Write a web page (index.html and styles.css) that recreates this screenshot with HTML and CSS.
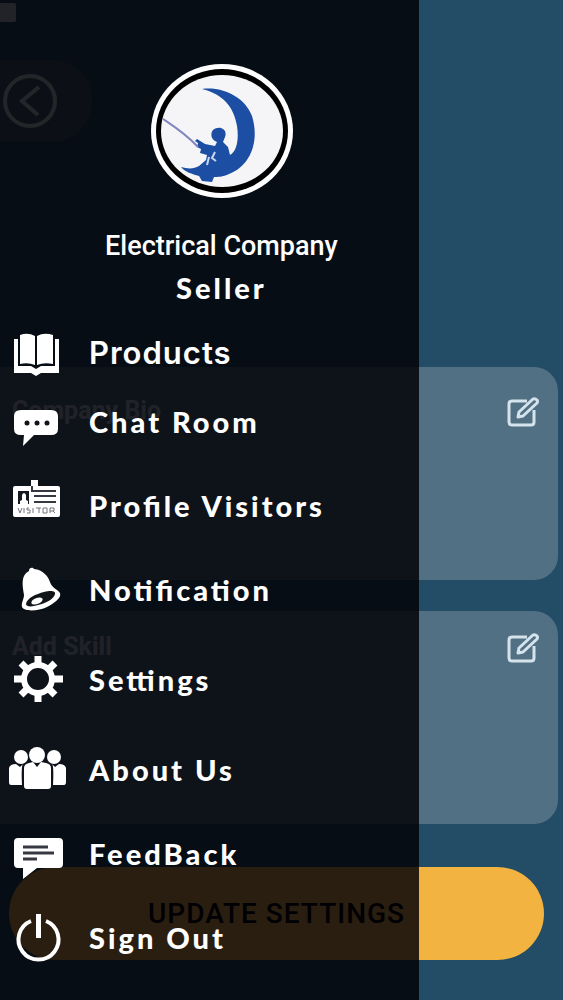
FILE: index.html
```html
<!DOCTYPE html>
<html lang="en">
<head>
    <meta charset="UTF-8">
    <meta name="viewport" content="width=device-width, initial-scale=1.0">
    <title>Seller Menu</title>
    <link rel="stylesheet" href="styles.css">
</head>
<body>
    <main class="page">
        <div class="status"><span class="status-icon"></span></div>
        <button class="back" type="button" aria-label="Back">
            <svg width="56" height="56" viewBox="0 0 56 56">
                <circle cx="28" cy="28" r="25"/>
                <path d="M37 14L20 28L36 42"/>
            </svg>
        </button>
        <section class="card">
            <h2>Company Bio</h2>
            <button class="edit" type="button" aria-label="Edit company bio">
                <svg width="34" height="34" viewBox="0 0 34 34">
                    <path d="M21 6H6Q3 6 3 9V27Q3 30 6 30H25Q28 30 28 27V15"/>
                    <path d="M12 22L13 17L27 4Q29 3 31 5Q32 6 31 8L17 21Z"/>
                </svg>
            </button>
        </section>
        <section class="card skill">
            <h2>Add Skill</h2>
            <button class="edit" type="button" aria-label="Edit skills">
                <svg width="34" height="34" viewBox="0 0 34 34">
                    <path d="M21 6H6Q3 6 3 9V27Q3 30 6 30H25Q28 30 28 27V15"/>
                    <path d="M12 22L13 17L27 4Q29 3 31 5Q32 6 31 8L17 21Z"/>
                </svg>
            </button>
        </section>
        <button class="update" type="button">UPDATE SETTINGS</button>
    </main>

    <aside class="drawer">
        <div class="profile">
            <!-- Company logo -->
            <svg class="logo" width="144" height="136" viewBox="0 0 144 136">
                <ellipse cx="73" cy="68" rx="71" ry="67" fill="#fff"/>
                <ellipse cx="73" cy="68" rx="66" ry="62" fill="#000"/>
                <ellipse cx="73" cy="68" rx="61" ry="56" fill="#f5f5f8"/>
                <path d="M53 26C73 23 96 34 103 53C111 79 101 103 80 111C74 114 68 114 65 114L63 119L53 118L50 113C43 111 36 109 32 104C39 106 45 106 50 103L57 97L58 92L51 90L52 86L48 84L49 80L46 78L48 76L56 81L66 83L68 79C62 77 61 71 64 67C70 62 79 66 76 74L74 79L79 84L81 92C88 88 90 76 88 63C85 44 74 31 53 26Z" fill="#1c4fa3"/>
                <path d="M14 56C26 64 37 71 49 84" fill="none" stroke="#8088bd" stroke-width="2"/>
                <path d="M60 94L58 102M66 89L63 95L67 98" fill="none" stroke="#c9d6ee" stroke-width="2"/>
            </svg>
            <h1>Electrical Company</h1>
            <p>Seller</p>
        </div>
        <nav>
            <ul class="menu">
                <li class="short">
                    <a href="#">
                        <svg viewBox="0 0 58 52">
                            <path d="M5 12H9V39H22L27 42L32 39H46V12H50V46H32L27 49L22 46H5Z"/>
                            <path d="M11 8Q19 5 26 9V38Q19 35 11 37Z"/>
                            <path d="M28 9Q35 5 44 8V37Q35 35 28 38Z"/>
                        </svg>
                        <span class="products">Products</span>
                    </a>
                </li>
                <li>
                    <a href="#">
                        <svg viewBox="0 0 58 52">
                            <path d="M12 14H42Q49 14 49 20V33Q49 39 42 39H25L14 50L15 39H12Q5 39 5 33V20Q5 14 12 14Z"/>
                            <g fill="#111318"><circle cx="18" cy="27" r="2.5"/><circle cx="28" cy="27" r="2.5"/><circle cx="38" cy="27" r="2.5"/></g>
                        </svg>
                        <span>Chat Room</span>
                    </a>
                </li>
                <li>
                    <a href="#">
                        <svg viewBox="0 0 58 52">
                            <path d="M6 6H22V0H29V6H49Q51 6 51 8V35Q51 37 49 37H6Q4 37 4 35V8Q4 6 6 6Z"/>
                            <path d="M9 11H20V24H9Z" fill="#15181e"/>
                            <path d="M11 24V21L13 20V15Q15 11 17 15V20L19 21V24Z"/>
                            <path d="M23 6V11H47M25 16H47M25 22H47" fill="none" stroke="#343840" stroke-width="2"/>
                            <path d="M9 28L11 33L13 28M15 28V33M20 28H18V30H21V33H18M24 28V33M27 28H32M30 28V33M34 28H38V33H34ZM41 33V28H45V31H41M44 31L46 33" fill="none" stroke="#70757b" stroke-width="1"/>
                        </svg>
                        <span>Profile Visitors</span>
                    </a>
                </li>
                <li class="tall">
                    <a href="#">
                        <svg viewBox="0 0 58 52">
                            <path d="M20 7C20 3 24 3 25 5C34 6 39 12 41 18C43 24 47 24 51 29C53 34 44 40 38 43C30 47 15 48 13 43C12 39 15 35 15 31C13 20 12 11 20 7Z"/>
                            <path d="M17 40C18 34 27 30 35 28C42 26 47 27 46 30C45 35 37 39 29 41C23 43 17 43 17 40Z" fill="#11151a"/>
                            <ellipse cx="28" cy="37" rx="6" ry="3" transform="rotate(-22 28 37)"/>
                        </svg>
                        <span>Notification</span>
                    </a>
                </li>
                <li class="tall">
                    <a href="#">
                        <svg viewBox="0 0 58 52">
                            <g fill="none" stroke="#fff">
                                <circle cx="29" cy="25" r="14" stroke-width="6"/>
                                <path d="M29 2V10M29 40V48M5 25H14M44 25H54M12 9L19 16M39 34L46 41M46 9L39 16M19 34L12 41" stroke-width="7"/>
                            </g>
                        </svg>
                        <span>Settings</span>
                    </a>
                </li>
                <li>
                    <a href="#">
                        <svg viewBox="0 0 58 52">
                            <circle cx="12" cy="13" r="7"/><circle cx="45" cy="13" r="7"/><circle cx="28" cy="11" r="8"/>
                            <path d="M0 24Q1 20 7 20L11 23L14 20Q12 22 13 41H2Q0 41 0 38Z"/>
                            <path d="M57 24Q56 20 50 20L46 23L43 20Q45 22 44 41H55Q57 41 57 38Z"/>
                            <path d="M15 24Q15 20 20 19L24 18L28 23L32 18L37 19Q42 20 42 24V42Q42 45 39 45H18Q15 45 15 42Z"/>
                        </svg>
                        <span>About Us</span>
                    </a>
                </li>
                <li>
                    <a href="#">
                        <svg viewBox="0 0 58 52">
                            <path d="M9 10H50Q54 10 54 14V36Q54 40 50 40H28L14 51V40H9Q5 40 5 36V14Q5 10 9 10Z"/>
                            <path d="M14 19H39M14 25H45M14 31H28" fill="none" stroke="#363a40" stroke-width="3"/>
                        </svg>
                        <span>FeedBack</span>
                    </a>
                </li>
                <li>
                    <a href="#">
                        <svg viewBox="0 0 58 52">
                            <path d="M22 9A20 20 0 1 0 37 9" fill="none" stroke="#fff" stroke-width="4"/>
                            <path d="M27 2H32V26H27Z"/>
                        </svg>
                        <span>Sign Out</span>
                    </a>
                </li>
            </ul>
        </nav>
    </aside>
</body>
</html>
```
FILE: styles.css
```css
* {
    box-sizing: border-box;
}

body {
    margin: 0;
    position: relative;
    min-height: 100vh;
    background-color: #234c66;
    font-family: Roboto, "Liberation Sans", sans-serif;
}

h1, h2, p, ul {
    margin: 0;
    padding: 0;
}

button {
    border: none;
    padding: 0;
    cursor: pointer;
}

/* Page behind the drawer */
.page {
    display: flex;
    flex-direction: column;
    padding-bottom: 40px;
}

.status {
    height: 60px;
    padding-top: 3px;
}

.status-icon {
    display: block;
    width: 16px;
    height: 19px;
    border-radius: 0 2px 2px 0;
    background-color: #c7d0d5;
}

.back {
    display: flex;
    align-items: center;
    width: 92px;
    height: 82px;
    margin-bottom: 225px;
    padding-left: 2px;
    border-radius: 0 40px 40px 0;
    background-color: #4a6069;
}

.back svg {
    fill: none;
    stroke: #d5d9da;
    stroke-width: 4;
}

.card {
    display: flex;
    justify-content: space-between;
    align-items: flex-start;
    min-height: 213px;
    margin: 0 5px 31px 0;
    padding: 28px 18px 28px 12px;
    border-radius: 0 24px 24px 0;
    background-color: #527083;
}

.card.skill {
    padding-top: 20px;
}

.card h2 {
    padding-top: 2px;
    color: #c3c9cd;
    font-size: 25px;
    line-height: 28px;
    font-weight: 700;
}

.edit {
    background: none;
    line-height: 0;
}

.edit svg {
    fill: none;
    stroke: #d5e3ec;
    stroke-width: 3;
    stroke-linejoin: round;
}

.update {
    height: 93px;
    margin: 12px 19px 0 9px;
    border-radius: 47px;
    background-color: #f2b340;
    color: #000;
    font-family: inherit;
    font-size: 28px;
    font-weight: 500;
    letter-spacing: 1px;
}

/* Drawer */
.drawer {
    position: absolute;
    top: 0;
    left: 0;
    width: 74.4%;
    min-height: 100%;
    padding-top: 63px;
    background-color: rgba(0, 0, 5, 0.83);
    color: #fff;
}

.profile {
    display: flex;
    flex-direction: column;
    align-items: center;
    margin-bottom: 17px;
    padding-left: 24px;
}

.profile h1 {
    margin-top: 27px;
    font-size: 27px;
    line-height: 40px;
    font-weight: 500;
}

.profile p,
.menu {
    font-family: Lato, "Liberation Sans", sans-serif;
    font-size: 29px;
    line-height: 44px;
    font-weight: 900;
    letter-spacing: 3px;
    font-feature-settings: "liga" 1;
}

.menu {
    list-style: none;
}

.menu li {
    min-height: 84px;
}

.menu .short {
    min-height: 69px;
}

.menu .tall {
    min-height: 90px;
}

.menu li:last-child {
    min-height: 52px;
}

.menu a {
    display: flex;
    align-items: center;
    gap: 22px;
    padding-left: 9px;
    color: #fff;
    text-decoration: none;
}

.menu svg {
    flex: none;
    width: 58px;
    height: 52px;
    fill: #fff;
}

.menu .products {
    font-family: Inter, "Liberation Sans", sans-serif;
    font-size: 31px;
    font-weight: 600;
    letter-spacing: 1px;
}
```
